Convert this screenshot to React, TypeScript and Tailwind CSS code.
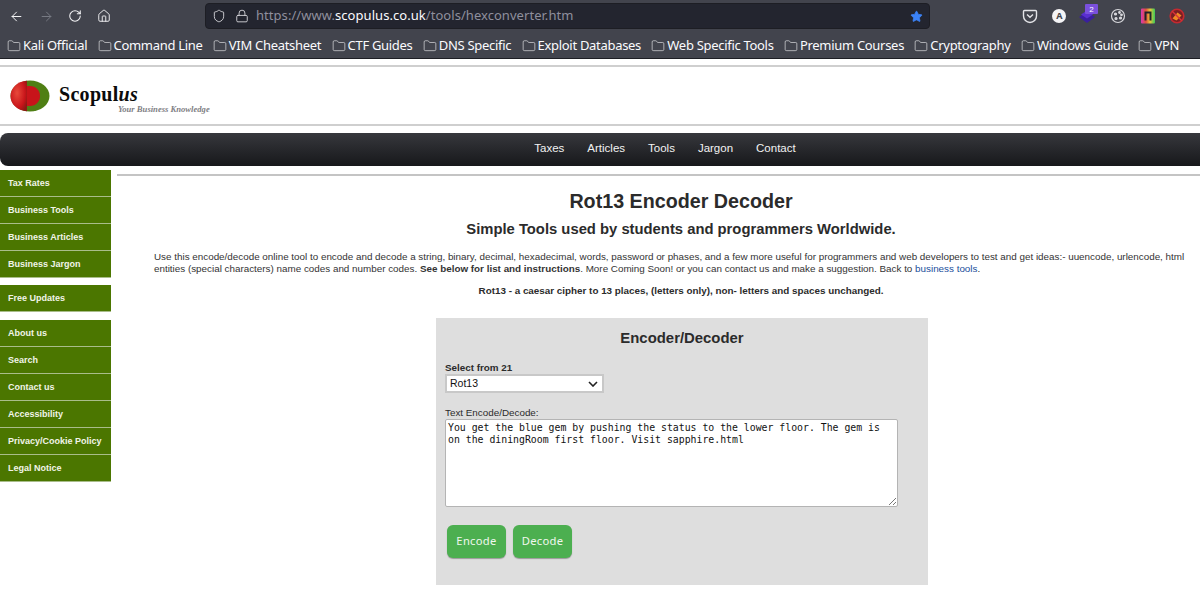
import { ArrowLeft, ArrowRight, Folder, House, Lock, RotateCw, Shield, Star } from "lucide-react";

const bookmarks = [
  "Kali Official",
  "Command Line",
  "VIM Cheatsheet",
  "CTF Guides",
  "DNS Specific",
  "Exploit Databases",
  "Web Specific Tools",
  "Premium Courses",
  "Cryptography",
  "Windows Guide",
  "VPN",
];

const navLinks = ["Taxes", "Articles", "Tools", "Jargon", "Contact"];

const sideGroups = [
  ["Tax Rates", "Business Tools", "Business Articles", "Business Jargon"],
  ["Free Updates"],
  ["About us", "Search", "Contact us", "Accessibility", "Privacy/Cookie Policy", "Legal Notice"],
];

function ExtensionIcons() {
  return (
    <div className="flex items-center pr-[8px] [&>div]:flex [&>div]:w-[29.500px] [&>div]:justify-center">
      <div>
        <svg width="16" height="16" viewBox="0 0 16 16" fill="none" stroke="#e4e4e8" strokeWidth="1.4">
          <path d="M2.500 2.500h11a1 1 0 0 1 1 1V8a6.500 6.500 0 0 1-13 0V3.500a1 1 0 0 1 1-1z" />
          <path d="M5 6.500l3 2.800 3-2.800" />
        </svg>
      </div>
      <div>
        <span className="flex h-[14px] w-[14px] items-center justify-center rounded-full bg-[#f4f4f6] text-[9px] font-bold text-[#42444d]">
          A
        </span>
      </div>
      <div>
        <svg width="22" height="22" viewBox="0 0 22 22" className="mt-[-3px]">
          <path d="M1 13l8-5 8 5-8 6z" fill="#3a1f9e" />
          <path d="M3 10.500l6-4 6 4-6 4z" fill="#5a2fd0" />
          <rect x="7" y="0" width="13" height="10" rx="1" fill="#7a50dd" />
          <text x="13.500" y="8" fontSize="8" fill="#ffffff" textAnchor="middle" fontFamily="Liberation Sans">
            2
          </text>
        </svg>
      </div>
      <div>
        <svg width="16" height="16" viewBox="0 0 16 16" fill="none" stroke="#d8d8dc" strokeWidth="1.2">
          <circle cx="8" cy="8" r="6.500" />
          <circle cx="5.500" cy="6" r="1" fill="#d8d8dc" />
          <circle cx="9.500" cy="4.500" r="0.800" fill="#d8d8dc" />
          <circle cx="6" cy="10.500" r="1" fill="#d8d8dc" />
          <circle cx="10.500" cy="10" r="1" fill="#d8d8dc" />
          <circle cx="11.500" cy="6.800" r="0.800" fill="#d8d8dc" />
        </svg>
      </div>
      <div>
        <svg width="16" height="16" viewBox="0 0 16 16">
          <defs>
            <linearGradient id="rainbow" x1="0" y1="0" x2="1" y2="0">
              <stop offset="0" stopColor="#d83ab0" />
              <stop offset="0.350" stopColor="#e0503a" />
              <stop offset="0.650" stopColor="#e8c83a" />
              <stop offset="1" stopColor="#3ac85a" />
            </linearGradient>
          </defs>
          <rect width="14" height="15" x="1" y="0.500" rx="1" fill="url(#rainbow)" />
          <path d="M4.500 12.500V3.500h7v9h-2v-7h-3v7z" fill="#20222a" />
        </svg>
      </div>
      <div>
        <svg width="16" height="16" viewBox="0 0 16 16">
          <circle cx="8" cy="8" r="6.800" fill="#7a1f24" stroke="#c42a30" strokeWidth="1.600" />
          <path d="M3.500 10.500l5-6 4 3-5 5z" fill="#f08a24" />
          <path d="M3.200 3.200l9.600 9.600" stroke="#d8343a" strokeWidth="1.400" />
        </svg>
      </div>
    </div>
  );
}

function BrowserChrome() {
  return (
    <div className="h-[59px] border-b border-[#1d1e24] bg-[#42444d] font-['Noto_Sans',sans-serif] text-[#fbfbfe]">
      <div className="flex h-[32px] items-center">
        <div className="flex w-[205px] items-center gap-[14.500px] pl-[9px] text-[#f4f4f6]">
          <ArrowLeft size={15} strokeWidth={1.6} />
          <ArrowRight size={15} strokeWidth={1.6} className="text-[#777a83]" />
          <RotateCw size={14} strokeWidth={1.8} />
          <House size={14} strokeWidth={1.6} />
        </div>
        <div className="flex h-[26px] w-[725px] items-center rounded-[4px] border border-[#1d1e24] bg-[#23252f] pl-[6px] pr-[6px]">
          <Shield size={14} strokeWidth={1.5} className="text-[#dcdce0]" />
          <Lock size={14} strokeWidth={1.5} className="ml-[9px] text-[#dcdce0]" />
          <span className="ml-[7px] text-[13px] tracking-[0.05px] text-[#8f8f9d]">
            https://www.<span className="text-[#fbfbfe]">scopulus.co.uk</span>/tools/hexconverter.htm
          </span>
          <Star size={13} fill="#3b82f6" strokeWidth={1.5} className="ml-auto text-[#3b82f6]" />
        </div>
        <div className="ml-auto">
          <ExtensionIcons />
        </div>
      </div>
      <div className="flex h-[26px] items-center gap-[10.300px] pl-[7px] pt-[1px]">
        {bookmarks.map((name) => (
          <span key={name} className="flex items-center gap-[2px] text-[13px] tracking-[-0.3px] whitespace-nowrap">
            <Folder size={14} strokeWidth={1} />
            {name}
          </span>
        ))}
      </div>
    </div>
  );
}

function Logo() {
  return (
    <div className="flex h-[57px] items-center pl-[10px]">
      <svg width="40" height="32" viewBox="0 0 40 32">
        <defs>
          <radialGradient id="red" cx="0.400" cy="0.400" r="0.700">
            <stop offset="0" stopColor="#e84a3a" />
            <stop offset="0.700" stopColor="#c8141a" />
            <stop offset="1" stopColor="#8c1a14" />
          </radialGradient>
        </defs>
        <ellipse cx="20" cy="16" rx="19.500" ry="15.500" fill="#4f7f14" />
        <path d="M17 0.700C7 1.500 0.500 8 0.500 16s6.500 14.500 16.500 15.300z" fill="url(#red)" />
        <path d="M17 6h3c6 0 10 4.500 10 10s-4 10-10 10h-3z" fill="#c8141a" />
      </svg>
      <div className="ml-[9px] mt-[5px] font-['Liberation_Serif',serif] text-[#0b0b0b]">
        <div className="text-[20px] leading-[22px] font-bold tracking-[0.3px]">
          Scopul<span className="italic">us</span>
        </div>
        <div className="ml-[59px] text-[8.600px] leading-[9px] font-bold text-[#808084] italic whitespace-nowrap">
          Your Business Knowledge
        </div>
      </div>
    </div>
  );
}

function Sidebar() {
  return (
    <aside className="mt-[4px] flex w-[111px] shrink-0 flex-col gap-[8px]">
      {sideGroups.map((group) => (
        <div key={group[0]} className="first:mb-[-1px]">
          {group.map((item) => (
            <div
              key={item}
              className="flex h-[27px] items-center border-b border-[#a9bd8a] bg-[#4b7600] pl-[8px] pt-[1px] text-[9px] font-bold whitespace-nowrap text-[#f1f4e8]"
            >
              {item}
            </div>
          ))}
        </div>
      ))}
    </aside>
  );
}

function EncoderPanel() {
  return (
    <div className="ml-[282px] mt-[21px] h-[267px] w-[492px] bg-[#dedede] px-[9px]">
      <h2 className="pt-[11px] text-center text-[14.900px] leading-[18px] font-bold">Encoder/Decoder</h2>
      <div className="mt-[15px] text-[9.850px] leading-[12px] font-bold">Select from 21</div>
      <div className="flex h-[19px] w-[159px] items-center justify-between border-2 border-[#c8c8c8] bg-white pl-[3px] pr-[4px] text-[10.500px]">
        <span className="text-[#111111]">Rot13</span>
        <svg width="10" height="6" viewBox="0 0 10 6" fill="none" stroke="#222222" strokeWidth="1.600">
          <path d="M1 1l4 4 4-4" />
        </svg>
      </div>
      <div className="mt-[13px] text-[9.850px] leading-[13px]">Text Encode/Decode:</div>
      <div className="relative h-[88px] w-[453px] rounded-[2px] border border-[#b4b4b4] bg-white pl-[2px] pt-[2px] font-['DejaVu_Sans_Mono',monospace] text-[9.830px] leading-[12px] whitespace-nowrap text-[#111111]">
        You get the blue gem by pushing the status to the lower floor. The gem is
        <br />
        on the diningRoom first floor. Visit sapphire.html
        <svg width="8" height="8" viewBox="0 0 8 8" className="absolute right-[1px] bottom-[1px]" stroke="#777777" strokeWidth="1">
          <path d="M1 8l7-7M5 8l3-3" />
        </svg>
      </div>
      <div className="mt-[18px] ml-[2px] flex gap-[7px] font-['Noto_Sans',sans-serif] text-[11.200px] tracking-[0.3px] text-[#f0f7ee]">
        <div className="flex h-[33px] w-[59px] items-center justify-center rounded-[6px] bg-[#4caf50] shadow-[0_1px_1px_#9a9a9a]">
          Encode
        </div>
        <div className="flex h-[33px] w-[59px] items-center justify-center rounded-[6px] bg-[#4caf50] shadow-[0_1px_1px_#9a9a9a]">
          Decode
        </div>
      </div>
    </div>
  );
}

export default function App() {
  return (
    <div className="h-[597px] overflow-hidden bg-white font-['Liberation_Sans',sans-serif] text-[#2b2b2b]">
      <BrowserChrome />
      <div className="mt-[6px] h-[2px] bg-[#cfcfcf]" />
      <Logo />
      <div className="h-[2px] bg-[#cfcfcf]" />
      <nav className="mt-[7px] flex h-[33px] items-center justify-center gap-[23px] rounded-l-[8px] bg-gradient-to-b from-[#37383d] to-[#17181b] pb-[2px] pl-[130px] text-[11.500px] text-[#f2f2f2]">
        {navLinks.map((link) => (
          <span key={link}>{link}</span>
        ))}
      </nav>
      <div className="flex">
        <Sidebar />
        <main className="ml-[6px] min-w-0 flex-1">
          <div className="mt-[8px] h-[2px] bg-[#c4c4c4]" />
          <div className="w-[1091px] pl-[37px]">
            <h1 className="mt-[13px] text-center text-[19.700px] leading-[24px] font-bold">Rot13 Encoder Decoder</h1>
            <h2 className="mt-[7px] text-center text-[14.800px] leading-[18px] font-bold">
              Simple Tools used by students and programmers Worldwide.
            </h2>
            <p className="mt-[13px] pr-[18px] text-[9.850px] leading-[12px] text-[#333333]">
              Use this encode/decode online tool to encode and decode a string, binary, decimal, hexadecimal, words,
              password or phases, and a few more useful for programmers and web developers to test and get ideas:-
              uuencode, urlencode, html entities (special characters) name codes and number codes.{" "}
              <b>See below for list and instructions</b>. More Coming Soon! or you can contact us and make a suggestion.
              Back to <span className="text-[#1a4f9c]">business tools</span>.
            </p>
            <p className="mt-[9px] text-center text-[9.850px] leading-[13px] font-bold">
              Rot13 - a caesar cipher to 13 places, (letters only), non- letters and spaces unchanged.
            </p>
            <EncoderPanel />
          </div>
        </main>
      </div>
    </div>
  );
}
